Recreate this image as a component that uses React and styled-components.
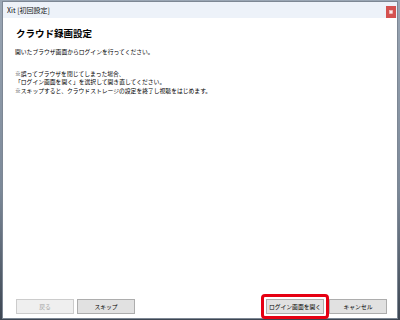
import React from 'react';
import styled, { createGlobalStyle } from 'styled-components';

const GlobalStyle = createGlobalStyle`
  html, body {
    margin: 0;
    padding: 0;
  }
  body {
    width: 400px;
    height: 320px;
    overflow: hidden;
    background: linear-gradient(180deg, #9aa6b4 0%, #7b8898 60%, #3d4652 100%);
    font-family: "Noto Sans CJK JP", "Noto Sans", sans-serif;
  }
`;

const Window = styled.div`
  box-sizing: border-box;
  margin: 1px 0 0 2px;
  width: 396px;
  height: 318px;
  background: #ffffff;
  border: 1px solid #7d8794;
  display: flex;
  flex-direction: column;
`;

const TitleBar = styled.div`
  height: 16px;
  flex: none;
  background: #edf2f9;
  display: flex;
  align-items: center;
  justify-content: space-between;
  padding: 0 1px 0 4px;
`;

const Title = styled.span`
  font-size: 7px;
  color: #111;
`;

const CloseButton = styled.div`
  width: 10px;
  height: 12px;
  margin-top: 3px;
  background: #d4514f;
  display: flex;
  align-items: center;
  justify-content: center;
`;

const Content = styled.div`
  flex: 1;
  padding: 8px 12px 0 12px;
  color: #000;
`;

const Heading = styled.h1`
  margin: 0 0 0 1px;
  font-size: 9.5px;
  line-height: 14px;
  font-weight: 700;
  color: #000;
`;

const Paragraph = styled.p`
  margin: ${p => p.$top}px 0 0 0;
  font-size: 5.8px;
  line-height: 8.5px;
`;

const Footer = styled.div`
  flex: none;
  display: flex;
  justify-content: space-between;
  align-items: center;
  padding: 0 10px 4px 13px;
`;

const ButtonGroup = styled.div`
  display: flex;
  gap: ${p => p.$gap}px;
`;

const Button = styled.button`
  box-sizing: border-box;
  width: 58px;
  height: 15px;
  padding: 0;
  font-family: inherit;
  font-size: 5.8px;
  line-height: 1;
  border: 1px solid ${p => (p.disabled ? '#cccccc' : '#adadad')};
  background: ${p => (p.disabled ? '#efefef' : '#e1e1e1')};
  color: ${p => (p.disabled ? '#a2a2a2' : '#000000')};
  border-radius: 0;
`;

const Highlight = styled.div`
  position: relative;
  display: flex;
`;

const RedFrame = styled.div`
  position: absolute;
  inset: -5px;
  border: 3px solid #e60012;
  border-radius: 4px;
  pointer-events: none;
`;

export default function App() {
  return (
    <>
      <GlobalStyle />
      <Window>
        <TitleBar>
          <Title>Xit [初回設定]</Title>
          <CloseButton>
            <svg width="4" height="4" viewBox="0 0 4 4">
              <rect x="0.5" y="0.5" width="3" height="3" fill="#fbe9e9" stroke="#f3c4c4" strokeWidth="0.6" />
            </svg>
          </CloseButton>
        </TitleBar>
        <Content>
          <Heading>クラウド録画設定</Heading>
          <Paragraph $top={8}>開いたブラウザ画面からログインを行ってください。</Paragraph>
          <Paragraph $top={13}>
            ※誤ってブラウザを閉じてしまった場合、
            <br />
            「ログイン画面を開く」を選択して開き直してください。
            <br />
            ※スキップすると、クラウドストレージの設定を終了し視聴をはじめます。
          </Paragraph>
        </Content>
        <Footer>
          <ButtonGroup $gap={3}>
            <Button disabled>戻る</Button>
            <Button>スキップ</Button>
          </ButtonGroup>
          <ButtonGroup $gap={5}>
            <Highlight>
              <Button>ログイン画面を開く</Button>
              <RedFrame />
            </Highlight>
            <Button>キャンセル</Button>
          </ButtonGroup>
        </Footer>
      </Window>
    </>
  );
}
